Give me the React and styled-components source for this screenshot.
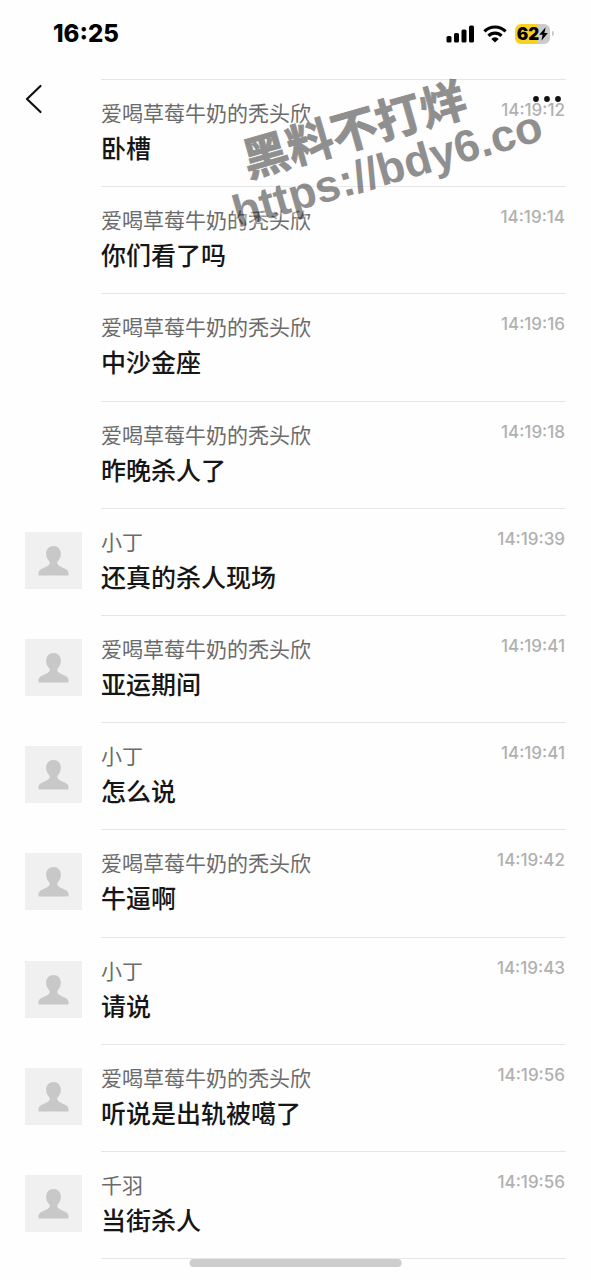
import React from 'react';
import styled, { createGlobalStyle } from 'styled-components';

const GlobalStyle = createGlobalStyle`
  * {
    box-sizing: border-box;
  }

  body {
    margin: 0;
    background: #fefefe;
    font-family: Inter, 'Noto Sans CJK SC', sans-serif;
  }
`;

const Page = styled.div`
  position: relative;
  display: flex;
  flex-direction: column;
  min-height: 100vh;
  padding-bottom: 21px;
  overflow: hidden;
`;

const StatusBar = styled.header`
  display: flex;
  align-items: center;
  justify-content: space-between;
  height: 67px;
  padding: 0 37px 0 53px;
  margin-bottom: 12px;
  color: #000;
`;

const Clock = styled.time`
  font-size: 24px;
  font-weight: 800;
  line-height: 24px;
`;

const StatusIcons = styled.div`
  display: flex;
  align-items: center;
  gap: 8px;
`;

const Battery = styled.div`
  display: flex;
  align-items: center;
  gap: 2px;
`;

const BatteryLevel = styled.div`
  display: flex;
  align-items: center;
  justify-content: center;
  width: 35px;
  height: 20px;
  border-radius: 6px;
  background: linear-gradient(to right, #f8d01f 62%, #cbcbcb 62%);
  font-size: 17px;
  font-weight: 900;
  line-height: 20px;
`;

const BatteryTip = styled.span`
  width: 2px;
  height: 5px;
  border-radius: 0 2px 2px 0;
  background: #cbcbcb;
`;

const NavBar = styled.nav`
  position: absolute;
  top: 79px;
  left: 0;
  right: 0;
  z-index: 2;
  display: flex;
  align-items: center;
  justify-content: space-between;
  height: 40px;
  padding: 0 26px 0 21px;
`;

const IconButton = styled.button`
  display: flex;
  align-items: center;
  justify-content: center;
  height: 40px;
  padding: 0 4px;
  border: 0;
  background: none;
  color: #111;
  cursor: pointer;
`;

const MessageList = styled.ul`
  display: flex;
  flex: 1;
  flex-direction: column;
  margin: 0;
  padding: 0 25px;
  list-style: none;
`;

const MessageRow = styled.li`
  display: flex;
  flex: 1;
  gap: 19px;
`;

const Avatar = styled.div`
  flex: none;
  align-self: flex-start;
  width: 57px;
  height: 57px;
  margin-top: 24px;
  background: #f0f0f0;
  visibility: ${({ $hidden }) => ($hidden ? 'hidden' : 'visible')};
`;

const MessageBody = styled.div`
  display: flex;
  flex: 1;
  align-items: flex-start;
  justify-content: space-between;
  min-width: 0;
  padding: 20px 1px 20px 0;
  border-top: 1px solid #e6e6e6;

  ${MessageRow}:last-child & {
    border-bottom: 1px solid #e6e6e6;
  }
`;

const Sender = styled.div`
  color: #6b6b6b;
  font-size: 21px;
  line-height: 28px;
`;

const Text = styled.p`
  margin: 4px 0 0;
  color: #161616;
  font-size: 25px;
  font-weight: 500;
  line-height: 34px;
`;

const Time = styled.time`
  color: #b0b0b0;
  font-size: 17px;
  font-weight: 500;
  line-height: 20px;
`;

const Watermark = styled.div`
  position: absolute;
  top: 101px;
  left: 221px;
  z-index: 1;
  color: #333;
  font-family: 'Liberation Sans', 'Noto Sans CJK SC', sans-serif;
  font-size: 45px;
  font-weight: 700;
  line-height: 46px;
  white-space: nowrap;
  opacity: 0.54;
  pointer-events: none;
  text-shadow: 0 0 4px #fffafa, 0 0 4px #fffafa, 0 0 5px #fffafa, 0 0 6px #fffafa;
  transform: rotate(-16deg);
`;

const WatermarkTitle = styled.div`
  padding-left: 24px;
  font-size: 46px;
  -webkit-text-stroke: 1px #333;
`;

const HomeIndicator = styled.div`
  position: absolute;
  bottom: 13px;
  left: 50%;
  width: 36%;
  height: 8px;
  border-radius: 4px;
  background: #cdcdcd;
  transform: translateX(-50%);
`;

const LONG_NAME = '爱喝草莓牛奶的秃头欣';

const messages = [
  { sender: LONG_NAME, text: '卧槽', time: '14:19:12', grouped: true },
  { sender: LONG_NAME, text: '你们看了吗', time: '14:19:14', grouped: true },
  { sender: LONG_NAME, text: '中沙金座', time: '14:19:16', grouped: true },
  { sender: LONG_NAME, text: '昨晚杀人了', time: '14:19:18', grouped: true },
  { sender: '小丁', text: '还真的杀人现场', time: '14:19:39' },
  { sender: LONG_NAME, text: '亚运期间', time: '14:19:41' },
  { sender: '小丁', text: '怎么说', time: '14:19:41' },
  { sender: LONG_NAME, text: '牛逼啊', time: '14:19:42' },
  { sender: '小丁', text: '请说', time: '14:19:43' },
  { sender: LONG_NAME, text: '听说是出轨被噶了', time: '14:19:56' },
  { sender: '千羽', text: '当街杀人', time: '14:19:56' },
];

function SignalIcon() {
  return (
    <svg width="29" height="18" viewBox="0 0 29 18" fill="currentColor" aria-hidden="true">
      <rect x="0.5" y="11" width="5" height="6.5" rx="1.6" />
      <rect x="8" y="8" width="5" height="9.5" rx="1.6" />
      <rect x="15.5" y="4.5" width="5" height="13" rx="1.6" />
      <rect x="23" y="0.5" width="5" height="17" rx="1.6" />
    </svg>
  );
}

function WifiIcon() {
  return (
    <svg width="24" height="18" viewBox="0 0 24 18" aria-hidden="true">
      <g fill="none" stroke="currentColor" strokeWidth="3.2">
        <path d="M1.400 6.400a15 15 0 0 1 21.200 0" />
        <path d="M5.500 10.800a9.200 9.200 0 0 1 13 0" />
      </g>
      <path d="M12 17.600l-3.700-3.700a5.200 5.200 0 0 1 7.400 0z" fill="currentColor" />
    </svg>
  );
}

function BoltIcon() {
  return (
    <svg width="9" height="14" viewBox="0 0 9 14" fill="currentColor" aria-hidden="true">
      <path d="M6.600 0.200L0.200 7.800h3.400L2.400 13.800l6.400-7.800H5.400z" />
    </svg>
  );
}

function PersonIcon() {
  return (
    <svg width="57" height="57" viewBox="0 0 57 57" fill="#c8c8c8" aria-hidden="true">
      <path d="M28.500 14c-4.400 0-7.400 3.300-7.400 7.700 0 3 1.200 5.300 2.700 7 .7.800 1 1.500 1 2.400 0 1.300-.8 2-2.200 2.800-2.800 1.500-5.400 2.300-7.100 3.700-1.600 1.200-2.100 2.600-2.100 4.700 0 .8.400 1.200 1.200 1.200h27.800c.8 0 1.200-.4 1.200-1.200 0-2.100-.5-3.500-2.100-4.700-1.700-1.400-4.300-2.200-7.100-3.700-1.400-.8-2.200-1.500-2.200-2.800 0-.9.300-1.600 1-2.400 1.500-1.700 2.700-4 2.700-7 0-4.400-3-7.700-7.400-7.700z" />
    </svg>
  );
}

function Message({ sender, text, time, grouped }) {
  return (
    <MessageRow>
      <Avatar $hidden={grouped}>
        <PersonIcon />
      </Avatar>
      <MessageBody>
        <div>
          <Sender>{sender}</Sender>
          <Text>{text}</Text>
        </div>
        <Time>{time}</Time>
      </MessageBody>
    </MessageRow>
  );
}

function App() {
  return (
    <Page>
      <GlobalStyle />
      <StatusBar>
        <Clock>16:25</Clock>
        <StatusIcons>
          <SignalIcon />
          <WifiIcon />
          <Battery>
            <BatteryLevel>
              62
              <BoltIcon />
            </BatteryLevel>
            <BatteryTip />
          </Battery>
        </StatusIcons>
      </StatusBar>
      <NavBar>
        <IconButton type="button" aria-label="返回">
          <svg width="18" height="30" viewBox="0 0 18 30" fill="none" stroke="currentColor" strokeWidth="2.200" strokeLinecap="round" strokeLinejoin="round">
            <path d="M15.500 2L2 15l13.500 13" />
          </svg>
        </IconButton>
        <IconButton type="button" aria-label="更多">
          <svg width="29" height="8" viewBox="0 0 29 8" fill="currentColor">
            <circle cx="4" cy="4" r="2.900" />
            <circle cx="15" cy="4" r="2.900" />
            <circle cx="26" cy="4" r="2.900" />
          </svg>
        </IconButton>
      </NavBar>
      <MessageList>
        {messages.map((message, index) => (
          <Message key={index} {...message} />
        ))}
      </MessageList>
      <Watermark>
        <WatermarkTitle>黑料不打烊</WatermarkTitle>
        <div>https://bdy6.co</div>
      </Watermark>
      <HomeIndicator />
    </Page>
  );
}

export default App;
